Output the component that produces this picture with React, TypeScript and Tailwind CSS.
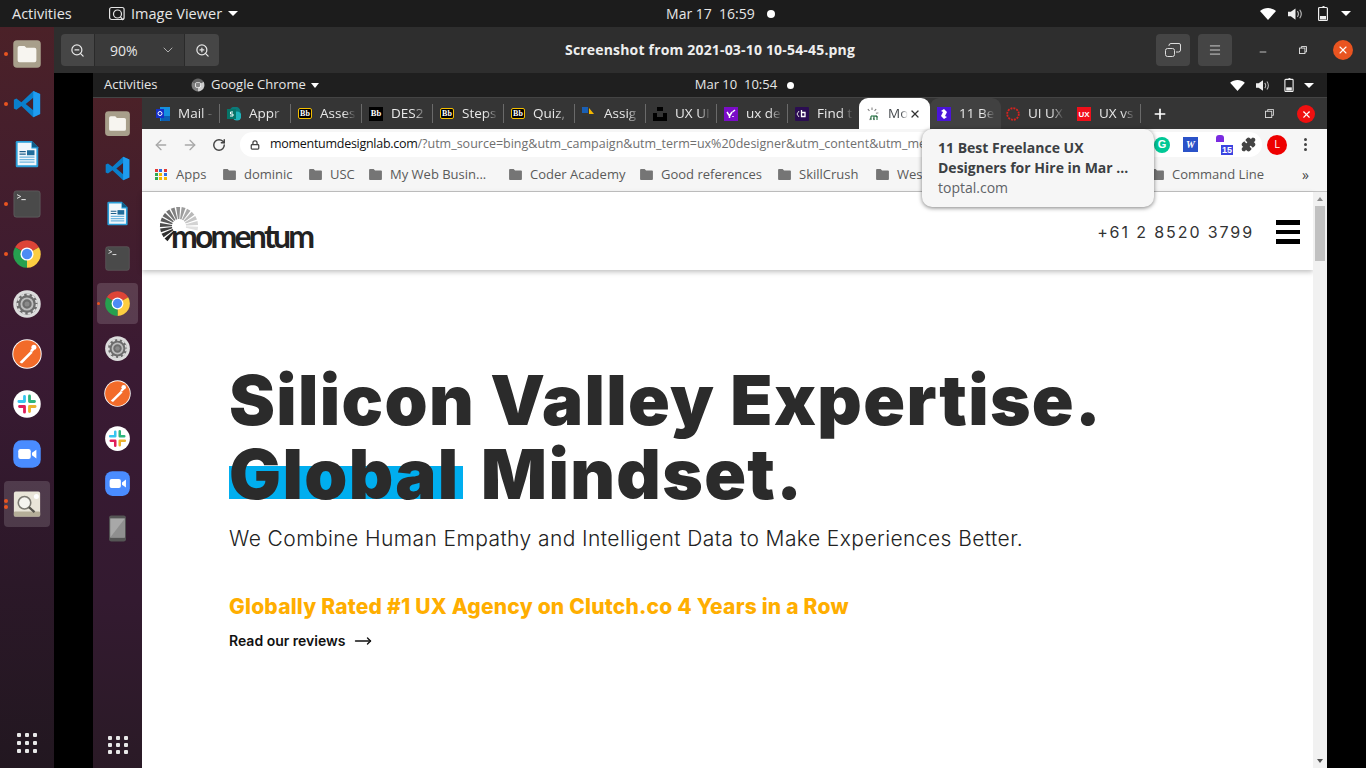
import { ChevronDown, Lock, RotateCw, ArrowLeft, ArrowRight, Plus, X, Menu, ZoomIn, ZoomOut, Minus, Puzzle, MoveRight } from "lucide-react";

const ui = "font-['Open_Sans','Noto_Sans',sans-serif]";

function Files({ className }: { className: string }) {
  return (
    <svg viewBox="0 0 48 48" className={className}>
      <rect x="2" y="2" width="44" height="44" rx="6" fill="#a89f8b" />
      <path d="M9 14a3 3 0 0 1 3-3h8l3 3h13a3 3 0 0 1 3 3v17a3 3 0 0 1-3 3H12a3 3 0 0 1-3-3z" fill="#f7f5f0" />
    </svg>
  );
}

function VsCode({ className }: { className: string }) {
  return (
    <svg viewBox="0 0 48 48" className={className}>
      <path d="M34 3l11 5v32l-11 5-19-18-8 6-4-2V17l4-2 8 6zM34 14L22 24l12 10z" fill="#0a7fcb" />
      <path d="M34 3l11 5v32l-11 5z" fill="#1f9cf0" />
    </svg>
  );
}

function Writer({ className }: { className: string }) {
  return (
    <svg viewBox="0 0 48 48" className={className}>
      <path d="M8 3h24l10 10v30a2 2 0 0 1-2 2H8a2 2 0 0 1-2-2V5a2 2 0 0 1 2-2z" fill="#2a9ed8" />
      <path d="M9 6h22v9h8v27H9z" fill="#f1f7fb" />
      <path d="M32 3l10 10H32z" fill="#0f5e8a" />
      <path d="M12 19h10v2H12zM12 23h10v2H12z" fill="#1c5f8a" />
      <path d="M12 28h24v2H12zM12 32h24v2H12zM12 36h24v2H12z" fill="#6fb6de" />
      <rect x="24" y="18" width="12" height="8" fill="#1f6d9c" />
    </svg>
  );
}

function Terminal({ className }: { className: string }) {
  return (
    <svg viewBox="0 0 48 48" className={className}>
      <rect x="3" y="3" width="42" height="42" rx="4" fill="#4a4a4a" stroke="#666" strokeWidth="1" />
      <path d="M8 9l6 3-6 3" fill="none" stroke="#ddd" strokeWidth="1.6" />
      <path d="M15 17h7" stroke="#eee" strokeWidth="1.6" />
    </svg>
  );
}

function Chrome({ className }: { className: string }) {
  return (
    <svg viewBox="0 0 48 48" className={className}>
      <path d="M24 24L4.95 13A22 22 0 0 1 43.05 13Z" fill="#dd4437" />
      <path d="M24 24L43.05 13A22 22 0 0 1 24 46Z" fill="#fccd41" />
      <path d="M24 24L24 46A22 22 0 0 1 4.95 13Z" fill="#26a04f" />
      <circle cx="24" cy="24" r="10.5" fill="#fff" />
      <circle cx="24" cy="24" r="8.3" fill="#4c8bf5" />
    </svg>
  );
}

function Gear({ className }: { className: string }) {
  return (
    <svg viewBox="0 0 48 48" className={className}>
      <circle cx="24" cy="24" r="22" fill="#dcdcdc" />
      <circle cx="24" cy="24" r="17" fill="#6d6d6d" />
      <circle cx="24" cy="24" r="15.5" fill="none" stroke="#dcdcdc" strokeWidth="3" strokeDasharray="5 4" />
      <circle cx="24" cy="24" r="9" fill="none" stroke="#bdbdbd" strokeWidth="3" />
      <circle cx="24" cy="24" r="4" fill="#8a8a8a" />
    </svg>
  );
}

function Postman({ className }: { className: string }) {
  return (
    <svg viewBox="0 0 48 48" className={className}>
      <circle cx="24" cy="24" r="23.5" fill="#fff" />
      <circle cx="24" cy="24" r="22" fill="#f26b2a" />
      <path d="M12 37L30 19l3 3-17 17z" fill="#fff" />
      <circle cx="35" cy="13" r="4" fill="#fff" />
      <path d="M29 18l4-4 3 3-4 4z" fill="#fff" />
    </svg>
  );
}

function Slack({ className }: { className: string }) {
  return (
    <svg viewBox="0 0 48 48" className={className} strokeWidth="4.5" strokeLinecap="round" fill="none">
      <circle cx="24" cy="24" r="22" fill="#fff" />
      <path d="M20 12v8M11 20h9" stroke="#36c5f0" />
      <path d="M28 11v9M28 20h8" stroke="#2eb67d" />
      <path d="M28 28v8M28 28h9" stroke="#ecb22e" />
      <path d="M20 28v9M12 28h8" stroke="#e01e5a" />
    </svg>
  );
}

function Zoom({ className }: { className: string }) {
  return (
    <svg viewBox="0 0 48 48" className={className}>
      <rect x="2" y="2" width="44" height="44" rx="13" fill="#4a8cff" />
      <rect x="10" y="16" width="20" height="16" rx="3.5" fill="#fff" />
      <path d="M32 22l7-5v14l-7-5z" fill="#fff" />
    </svg>
  );
}

function Viewer({ className }: { className: string }) {
  return (
    <svg viewBox="0 0 48 48" className={className}>
      <rect x="3" y="4" width="42" height="40" rx="3" fill="#e9e5d8" />
      <rect x="3" y="36" width="42" height="8" rx="2" fill="#b5ae98" />
      <circle cx="39" cy="12" r="4" fill="#fff" />
      <circle cx="20" cy="22" r="10" fill="#f5f4ef" stroke="#7c7a72" strokeWidth="2.5" />
      <path d="M27 29l9 8" stroke="#55534c" strokeWidth="3.5" />
    </svg>
  );
}

function Phone({ className }: { className: string }) {
  return (
    <svg viewBox="0 0 48 48" className={className}>
      <rect x="9" y="1" width="30" height="46" rx="4" fill="#555" />
      <rect x="11" y="6" width="26" height="34" fill="#a8a8a8" />
      <path d="M11 40L37 6v34z" fill="#8f8f8f" />
    </svg>
  );
}

function DockGrid({ className }: { className: string }) {
  return (
    <div className={`grid grid-cols-3 ${className}`}>
      {Array.from({ length: 9 }).map((_, i) => (
        <span key={i} className="w-1 h-1 bg-[#e8e8e8] rounded-[1px]" />
      ))}
    </div>
  );
}

function RunDots({ n = 1 }: { n?: number }) {
  return (
    <div className="absolute left-[4px] top-1/2 -translate-y-1/2 flex flex-col gap-[2px]">
      {Array.from({ length: n }).map((_, i) => (
        <span key={i} className="block w-1 h-1 rounded-full bg-[#e95420]" />
      ))}
    </div>
  );
}

function OuterDock() {
  const size = "w-[30px] h-[30px]";
  const items = [
    { Icon: Files, run: 1 },
    { Icon: VsCode, run: 1 },
    { Icon: Writer, run: 0 },
    { Icon: Terminal, run: 1 },
    { Icon: Chrome, run: 1 },
    { Icon: Gear, run: 0 },
    { Icon: Postman, run: 0 },
    { Icon: Slack, run: 0 },
    { Icon: Zoom, run: 0 },
    { Icon: Viewer, run: 2, active: true },
  ];
  return (
    <div className="w-[54px] shrink-0 flex flex-col items-center pt-[2px] bg-[linear-gradient(to_bottom,#4b2128,#3a1a33_45%,#2b1828_75%,#221720)]">
      {items.map(({ Icon, run, active }, i) => (
        <div key={i} className="relative w-full h-[50px] flex items-center justify-center">
          {active && <div className="absolute left-[4px] top-[2px] w-[46px] h-[46px] rounded bg-white/15" />}
          {run > 0 && <RunDots n={run} />}
          <Icon className={`${size} relative`} />
        </div>
      ))}
      <DockGrid className="mt-auto mb-[15px] gap-[4px] [&>span]:w-[4px] [&>span]:h-[4px]" />
    </div>
  );
}

function InnerDock() {
  const size = "w-[27px] h-[27px]";
  const items = [Files, VsCode, Writer, Terminal, Chrome, Gear, Postman, Slack, Zoom, Phone];
  return (
    <div className="w-[49px] shrink-0 flex flex-col items-center pt-[3px] bg-[linear-gradient(to_bottom,#4b2128,#3a1a33_40%,#331a30_75%,#2a1a26)]">
      {items.map((Icon, i) => (
        <div key={i} className="relative w-full h-[45px] flex items-center justify-center">
          {i === 4 && (
            <>
              <div className="absolute left-[4px] top-[2px] w-[41px] h-[41px] rounded bg-white/15" />
              <span className="absolute left-[4px] top-[21px] w-[3px] h-[3px] rounded-full bg-[#e95420]" />
            </>
          )}
          <Icon className={`${size} relative`} />
        </div>
      ))}
      <DockGrid className="mt-auto mb-[14px] gap-x-[4px] gap-y-[3px] [&>span]:w-[4px] [&>span]:h-[4px]" />
    </div>
  );
}

function SysIcons({ small }: { small?: boolean }) {
  return (
    <div className="flex items-center">
      <svg viewBox="0 0 16 12" className={small ? "w-[15px] h-[11px]" : "w-[16px] h-[12px]"}>
        <path d="M8 12L0 3c4.500-4 11.500-4 16 0z" fill="#fff" />
      </svg>
      <svg viewBox="0 0 16 14" className={small ? "w-[14px] h-[13px] ml-[11px]" : "w-[15px] h-[14px] ml-[12px]"}>
        <path d="M0 4.500h3L8 1v12L3 9.500H0z" fill="#eee" />
        <path d="M10 4c1.500 2 1.500 4 0 6M12.500 2.500c2.200 3 2.200 6 0 9" fill="none" stroke="#bbb" strokeWidth="1.200" />
      </svg>
      <svg viewBox="0 0 10 15" className={small ? "w-[10px] h-[14px] ml-[14px]" : "w-[10px] h-[15px] ml-[15px]"}>
        <path d="M3.500 0h3v1.500" fill="#eee" />
        <rect x="0.600" y="1.500" width="8.800" height="13" rx="1" fill="none" stroke="#eee" strokeWidth="1.200" />
        <rect x="2" y="10" width="6" height="3.500" fill="#eee" />
      </svg>
      <span className={`w-0 h-0 border-x-[5px] border-x-transparent border-t-[5px] border-t-white ${small ? "ml-[10px]" : "ml-[13px]"}`} />
    </div>
  );
}

function Fav({ kind }: { kind: string }) {
  const box = "w-[14px] h-[14px] shrink-0";
  if (kind === "bb")
    return (
      <span className="w-[14px] h-[11px] shrink-0 flex items-center justify-center text-[8px] font-bold leading-none font-['Liberation_Serif',serif] bg-black text-white border border-[#f5bf00] rounded-[2px]">
        Bb
      </span>
    );
  if (kind === "bbk")
    return (
      <span className="w-[14px] h-[14px] shrink-0 flex items-center justify-center text-[8.500px] font-bold leading-none font-['Liberation_Serif',serif] bg-black text-white">
        Bb
      </span>
    );
  return (
    <svg viewBox="0 0 14 14" className={box}>
      {kind === "mail" && (
        <>
          <rect x="4" y="0" width="10" height="14" fill="#1490df" />
          <path d="M5 9h9v5H5z" fill="#0a5fb4" />
          <rect x="0" y="2" width="8" height="9" fill="#1530c8" />
          <circle cx="4" cy="6.500" r="2" fill="none" stroke="#fff" />
        </>
      )}
      {kind === "sp" && (
        <>
          <circle cx="8" cy="5" r="5.500" fill="#0b7a7a" />
          <circle cx="10" cy="9" r="4.500" fill="#1fb4bb" />
          <rect x="0" y="2" width="9" height="10" fill="#077568" />
          <path d="M6 5H3.500v2H6v2H3" fill="none" stroke="#fff" />
        </>
      )}
      {kind === "usc" && (
        <>
          <rect x="0" y="0" width="6" height="6" fill="#1a5fb4" />
          <path d="M7 1l5 6H7z" fill="#f5b800" />
          <rect x="0" y="9" width="12" height="4" fill="#333" />
        </>
      )}
      {kind === "unsplash" && <path d="M4 0h6v4H4zM0 6h4v4h6V6h4v8H0z" fill="#000" />}
      {kind === "yahoo" && (
        <>
          <rect width="14" height="14" fill="#7b0dc8" />
          <path d="M3 5l2.500 4v2M8 5L5.500 9M8.500 5L11 3M9 9v1" fill="none" stroke="#fff" strokeWidth="1.500" />
        </>
      )}
      {kind === "db" && (
        <>
          <rect width="14" height="14" rx="1" fill="#2b0d52" />
          <path d="M4 4L2 7l2 3" fill="none" stroke="#ddd" />
          <path d="M6.500 3v6.500h3.500v-4H6.500" fill="none" stroke="#fff" strokeWidth="1.300" />
        </>
      )}
      {kind === "mo" && (
        <>
          {[0, 40, 80, 120, 160, 200, 240].map((a) => (
            <path key={a} d="M6 3L6 0.500" stroke="#777" strokeWidth="1" transform={`rotate(${a - 40} 6 7)`} />
          ))}
          <path d="M5 13V9h3v4M8 9h3v4" fill="none" stroke="#116633" />
        </>
      )}
      {kind === "toptal" && (
        <>
          <rect width="14" height="14" fill="#4a14d8" />
          <path d="M7 2l3 3-2 4 2 1-3 2-3-3 2-4-2-1z" fill="#fff" />
        </>
      )}
      {kind === "ring" && <circle cx="7" cy="7" r="5.800" fill="none" stroke="#d7231f" strokeWidth="1.800" strokeDasharray="2 1" />}
      {kind === "ux" && (
        <>
          <rect width="14" height="14" fill="#f0101a" />
          <text x="7" y="10" textAnchor="middle" fontSize="8" fontWeight="700" fill="#fff" fontFamily="Liberation Sans, sans-serif">UX</text>
        </>
      )}
    </svg>
  );
}

const tabs = [
  { kind: "mail", title: "Mail -" },
  { kind: "sp", title: "Appr" },
  { kind: "bb", title: "Asses" },
  { kind: "bbk", title: "DES2" },
  { kind: "bb", title: "Steps" },
  { kind: "bb", title: "Quiz," },
  { kind: "usc", title: "Assig" },
  { kind: "unsplash", title: "UX UI" },
  { kind: "yahoo", title: "ux de" },
  { kind: "db", title: "Find t" },
];

const fade = "overflow-hidden whitespace-nowrap [mask-image:linear-gradient(to_right,black_65%,transparent)]";

function TabStrip() {
  return (
    <div className={`h-[31px] bg-[#353535] flex items-end pl-[7px] text-[13.500px] text-[#e8e8e8] ${ui}`}>
      {tabs.map((t, i) => (
        <div key={i} className={`w-[71px] h-[31px] flex items-center pl-[7px] ${i < 9 ? "border-r border-[#5c5c5c] [border-image:linear-gradient(transparent_20%,#6a6a6a_20%,#6a6a6a_80%,transparent_80%)_1]" : ""}`}>
          <Fav kind={t.kind} />
          <span className={`ml-[8px] w-[36px] ${fade}`}>{t.title}</span>
        </div>
      ))}
      <div className="w-[71px] h-[31px] bg-white rounded-t-[9px] flex items-center pl-[7px] text-[#45494d]">
        <Fav kind="mo" />
        <span className={`ml-[8px] w-[20px] ${fade}`}>Mo</span>
        <X className="w-[12px] h-[12px] ml-[1px] text-[#333]" strokeWidth={2.500} />
      </div>
      <div className="w-[71px] h-[31px] bg-[#414141] rounded-t-[9px] flex items-center pl-[7px]">
        <Fav kind="toptal" />
        <span className={`ml-[8px] w-[36px] ${fade}`}>11 Be</span>
      </div>
      <div className="w-[71px] h-[31px] flex items-center pl-[5px]">
        <Fav kind="ring" />
        <span className={`ml-[8px] w-[36px] ${fade}`}>UI UX</span>
      </div>
      <div className="w-[69px] h-[31px] flex items-center pl-[5px] border-r border-[#5c5c5c] [border-image:linear-gradient(transparent_20%,#6a6a6a_20%,#6a6a6a_80%,transparent_80%)_1]">
        <Fav kind="ux" />
        <span className={`ml-[8px] w-[36px] ${fade}`}>UX vs</span>
      </div>
      <Plus className="w-[16px] h-[16px] ml-[11px] mb-[7px] text-white" strokeWidth={2.500} />
      <svg viewBox="0 0 10 10" className="w-[9px] h-[9px] ml-[97px] mb-[11px]" fill="none" stroke="#ddd" strokeWidth="1">
        <rect x="0.500" y="2.500" width="7" height="7" />
        <path d="M3 2.500V0.500h6.500v6.500H7.500" />
      </svg>
      <span className="ml-[23px] mb-[6px] w-[18px] h-[18px] rounded-full bg-[#f01010] flex items-center justify-center">
        <X className="w-[11px] h-[11px] text-white" strokeWidth={2.500} />
      </span>
    </div>
  );
}

function Toolbar() {
  return (
    <div className="h-[29px] bg-[#f6f6f6] flex items-center pt-[2px]">
      <ArrowLeft className="w-[16px] h-[16px] ml-[11px] text-[#a8a8a8]" strokeWidth={2} />
      <ArrowRight className="w-[16px] h-[16px] ml-[13px] text-[#a8a8a8]" strokeWidth={2} />
      <RotateCw className="w-[14px] h-[14px] ml-[14px] text-[#444]" strokeWidth={2.500} />
      <div className={`ml-[14px] w-[1022px] h-[25px] rounded-full bg-white flex items-center pl-[10px] text-[12.500px] whitespace-nowrap overflow-hidden ${ui}`}>
        <Lock className="w-[10px] h-[10px] text-[#444] shrink-0" strokeWidth={3} />
        <span className="ml-[10px] text-[#111] tracking-[-0.280px]">momentumdesignlab.com</span>
        <span className="text-[#6f6f6f]">/?utm_source=bing&amp;utm_campaign&amp;utm_term=ux%20designer&amp;utm_content&amp;utm_me</span>
      </div>
      <span className="w-[4px]" />
      <span className="w-[16px] h-[16px] -ml-[112px] relative rounded-full bg-[#00c896] text-white text-[11px] font-bold flex items-center justify-center font-['Liberation_Sans',sans-serif]">G</span>
      <span className="ml-[13px] relative w-[15px] h-[15px] bg-[#2a52c8] text-white text-[10px] italic font-bold flex items-center justify-center font-['Liberation_Serif',serif]">W</span>
      <span className="ml-[17px] relative w-[18px] h-[20px]">
        <span className="absolute left-[1px] top-0 w-[8px] h-[7px] bg-[#7a2be0] rounded-t-[3px]" />
        <span className="absolute right-0 bottom-0 bg-[#3b44e0] text-white text-[9px] font-bold leading-[10px] px-[1px] font-['Liberation_Sans',sans-serif]">15</span>
      </span>
      <Puzzle className="w-[15px] h-[15px] ml-[8px] relative text-[#444] fill-[#444]" />
      <span className={`ml-[11px] w-[20px] h-[20px] rounded-full bg-[#ee0000] text-white text-[11px] flex items-center justify-center relative ${ui}`}>L</span>
      <span className="ml-[17px] flex flex-col gap-[2px] relative">
        <i className="block w-[3px] h-[3px] rounded-full bg-[#444]" />
        <i className="block w-[3px] h-[3px] rounded-full bg-[#444]" />
        <i className="block w-[3px] h-[3px] rounded-full bg-[#444]" />
      </span>
    </div>
  );
}

const bookmarks = [
  { name: "dominic", cls: "w-[86px]" },
  { name: "USC", cls: "w-[60px]" },
  { name: "My Web Busin...", cls: "w-[140px]" },
  { name: "Coder Academy", cls: "w-[131px]" },
  { name: "Good references", cls: "w-[138px]" },
  { name: "SkillCrush", cls: "w-[98px]" },
  { name: "Wes", cls: "w-[275px]" },
  { name: "Command Line", cls: "w-[150px]" },
];

function Folder() {
  return (
    <svg viewBox="0 0 14 12" className="w-[13px] h-[11px] shrink-0" fill="#757575">
      <path d="M0 1a1 1 0 0 1 1-1h4l1.500 1.500H13a1 1 0 0 1 1 1V11a1 1 0 0 1-1 1H1a1 1 0 0 1-1-1z" />
    </svg>
  );
}

function BookmarkBar() {
  const appColors = ["bg-[#e53935]", "bg-[#2f6fe0]", "bg-[#e53935]", "bg-[#2fa84f]", "bg-[#f5b800]", "bg-[#2f6fe0]", "bg-[#2fa84f]", "bg-[#f5b800]", "bg-[#f5b800]"];
  return (
    <div className={`h-[34px] bg-[#f6f6f6] border-b border-[#c4c4c4] flex items-center text-[13px] text-[#5a5a5a] whitespace-nowrap ${ui}`}>
      <div className="grid grid-cols-3 gap-[1px] ml-[13px] w-[12px]">
        {appColors.map((c, i) => (
          <span key={i} className={`w-[3px] h-[3px] ${c}`} />
        ))}
      </div>
      <span className="ml-[9px] w-[47px]">Apps</span>
      {bookmarks.map((b) => (
        <div key={b.name} className={`${b.cls} flex items-center shrink-0`}>
          <Folder />
          <span className="ml-[8px]">{b.name}</span>
        </div>
      ))}
      <span className="text-[14px] text-[#444] ml-[1px]">»</span>
    </div>
  );
}

function Burst() {
  const rays = Array.from({ length: 15 });
  return (
    <svg viewBox="0 0 44 44" className="absolute -left-[3px] top-[12px] w-[44px] h-[44px]">
      {rays.map((_, i) => {
        const t = i / (rays.length - 1);
        const shade = Math.round(225 - t * 190);
        return (
          <path
            key={i}
            d="M29 21.300L41 20v4L29 22.700z"
            fill={`rgb(${shade},${shade},${shade})`}
            transform={`rotate(${-t * 235 + 8} 22 22)`}
          />
        );
      })}
    </svg>
  );
}

function Page() {
  return (
    <div className="flex-1 flex min-h-0">
      <div className="flex-1 bg-white flex flex-col">
        <header className="h-[78px] shrink-0 flex items-center pl-[18px] pr-[13px] shadow-[0_2px_5px_rgba(0,0,0,0.25)] relative">
          <div className="relative w-[160px] h-[78px]">
            <span className="absolute left-[11px] top-[25px] text-[32px] leading-[38px] font-bold tracking-[-2.800px] text-[#222] font-['Lato',sans-serif]">momentum</span>
            <Burst />
          </div>
          <span className="ml-auto text-[16px] tracking-[1.900px] text-[#333] mt-[1px] font-['Inter',sans-serif]">+61 2 8520 3799</span>
          <div className="ml-[22px] w-[24px] flex flex-col gap-[5px] mt-[1px]">
            <span className="h-[5px] bg-black" />
            <span className="h-[4px] bg-black" />
            <span className="h-[5px] bg-black" />
          </div>
        </header>
        <main className="pl-[87px] pt-[93px] font-['Inter',sans-serif]">
          <h1 className="text-[69px] leading-[74px] font-black text-[#2b2b2b] tracking-[1.350px]">
            <div>Silicon Valley Expertise.</div>
            <div>
              <span className="inline-block w-[234px] mr-[3px] bg-[linear-gradient(to_bottom,transparent_29px,#00aeef_29px,#00aeef_62px,transparent_62px)]">Global</span> Mindset.
            </div>
          </h1>
          <p className="mt-[14px] text-[21px] leading-[28px] font-light text-[#222] tracking-[0.420px]">
            We Combine Human Empathy and Intelligent Data to Make Experiences Better.
          </p>
          <p className="mt-[40px] text-[21px] leading-[28px] font-extrabold text-[#ffae00] tracking-[0.200px]">
            Globally Rated #1 UX Agency on Clutch.co 4 Years in a Row
          </p>
          <div className="mt-[9px] flex items-center text-[14px] font-semibold text-[#111]">
            Read our reviews
            <MoveRight className="w-[22px] h-[18px] ml-[6px]" strokeWidth={1.800} />
          </div>
        </main>
      </div>
      <div className="w-[14px] bg-[#f1f1f1] flex flex-col items-center relative">
        <span className="mt-[5px] w-0 h-0 border-x-[3.500px] border-x-transparent border-b-[4px] border-b-[#8a8a8a]" />
        <span className="mt-[5px] w-[10px] h-[55px] bg-[#c1c1c1]" />
        <span className="mt-auto mb-[5px] w-0 h-0 border-x-[3.500px] border-x-transparent border-t-[4px] border-t-[#505050]" />
      </div>
    </div>
  );
}

export default function App() {
  return (
    <div className={`relative w-[1366px] h-[768px] overflow-hidden flex flex-col bg-black ${ui}`}>
      <div className="h-[27px] shrink-0 bg-[#1c1c1c] flex items-center pl-[12px] text-[14.500px] text-[#e6e6e6]">
        <span className="w-[97px]">Activities</span>
        <svg viewBox="0 0 16 16" className="w-[16px] h-[16px]" fill="none" stroke="#e6e6e6" strokeWidth="1.200">
          <rect x="0.600" y="1.500" width="14.500" height="12" rx="2" />
          <circle cx="8.500" cy="8" r="4" />
          <path d="M11.500 11l2.500 3" />
        </svg>
        <span className="ml-[6px]">Image Viewer</span>
        <span className="ml-[6px] w-0 h-0 border-x-[5px] border-x-transparent border-t-[5px] border-t-white" />
        <span className="ml-[428px] whitespace-pre text-[14px]">Mar 17  16:59</span>
        <span className="ml-[12px] w-[8px] h-[8px] rounded-full bg-white" />
        <div className="ml-auto pr-[15px]">
          <SysIcons />
        </div>
      </div>
      <div className="flex-1 flex min-h-0">
        <OuterDock />
        <div className="flex-1 flex flex-col min-w-0">
          <div className="h-[46px] shrink-0 bg-[#2e2e2e] flex items-center pl-[7px]">
            <div className="flex h-[32px] rounded overflow-hidden text-[14px] text-[#e6e6e6]">
              <div className="w-[34px] bg-[#464646] flex items-center justify-center border-r border-[#2a2a2a]">
                <ZoomOut className="w-[15px] h-[15px]" />
              </div>
              <div className="w-[90px] bg-[#3a3a3a] flex items-center justify-between pl-[15px] pr-[6px] border-r border-[#2a2a2a]">
                90%
                <ChevronDown className="w-[20px] h-[16px] text-[#ccc]" strokeWidth={1.200} />
              </div>
              <div className="w-[34px] bg-[#464646] flex items-center justify-center">
                <ZoomIn className="w-[15px] h-[15px]" />
              </div>
            </div>
            <span className="ml-[346px] mb-[1px] text-[14px] tracking-[0.180px] font-bold text-[#eee] whitespace-nowrap">Screenshot from 2021-03-10 10-54-45.png</span>
            <div className="ml-[301px] w-[34px] h-[32px] rounded bg-[#454545] flex items-center justify-center">
              <svg viewBox="0 0 16 14" className="w-[16px] h-[14px]" fill="none" stroke="#ddd" strokeWidth="1">
                <rect x="0.500" y="5.500" width="9" height="8" rx="2" />
                <path d="M4 3V2.500a2 2 0 0 1 2-2h8a1.500 1.500 0 0 1 1.500 1.500v5a2 2 0 0 1-2 2H11" />
              </svg>
            </div>
            <div className="ml-[8px] w-[34px] h-[32px] rounded bg-[#454545] flex items-center justify-center">
              <Menu className="w-[14px] h-[14px] text-[#ddd]" strokeWidth={1.500} />
            </div>
            <Minus className="w-[10px] h-[10px] ml-[26px] mt-[4px] text-[#ddd]" strokeWidth={2} />
            <svg viewBox="0 0 10 10" className="w-[8px] h-[8px] ml-[31px]" fill="none" stroke="#ddd" strokeWidth="1.200">
              <rect x="0.600" y="2.600" width="6.800" height="6.800" />
              <path d="M3 2.500V0.600h6.400v6.800H7.500" />
            </svg>
            <span className="ml-[26px] w-[20px] h-[20px] rounded-full bg-[#e95420] flex items-center justify-center">
              <X className="w-[12px] h-[12px] text-white" strokeWidth={2.200} />
            </span>
          </div>
          <div className="flex-1 flex min-h-0">
            <div className="w-[39px] bg-black shrink-0" />
            <div className="flex-1 flex flex-col min-w-0">
              <div className="h-[25px] shrink-0 bg-[#1f1f1f] border-b border-[#444] flex items-center pl-[11px] text-[13px] text-[#e6e6e6]">
                <span className="w-[87px]">Activities</span>
                <Chrome className="w-[14px] h-[14px] grayscale" />
                <span className="ml-[6px]">Google Chrome</span>
                <span className="ml-[5px] w-0 h-0 border-x-[4.500px] border-x-transparent border-t-[5px] border-t-white" />
                <span className="ml-[376px] whitespace-pre">Mar 10  10:54</span>
                <span className="ml-[10px] w-[7px] h-[7px] rounded-full bg-white" />
                <div className="ml-auto pr-[13px]">
                  <SysIcons small />
                </div>
              </div>
              <div className="flex-1 flex min-h-0">
                <InnerDock />
                <div className="flex-1 flex flex-col min-w-0">
                  <TabStrip />
                  <Toolbar />
                  <BookmarkBar />
                  <Page />
                </div>
              </div>
            </div>
            <div className="w-[39px] bg-black shrink-0" />
          </div>
        </div>
      </div>
      <div className="absolute left-[922px] top-[129px] w-[232px] h-[78px] rounded-[10px] bg-[#f6f6f6] shadow-[0_1px_4px_rgba(0,0,0,0.5)] pl-[16px] pt-[9px] text-[14px] leading-[20px] text-[#3c4043]">
        <div className="font-bold whitespace-nowrap">11 Best Freelance UX</div>
        <div className="font-bold whitespace-nowrap">Designers for Hire in Mar ...</div>
        <div className="text-[#5f6368]">toptal.com</div>
      </div>
    </div>
  );
}
